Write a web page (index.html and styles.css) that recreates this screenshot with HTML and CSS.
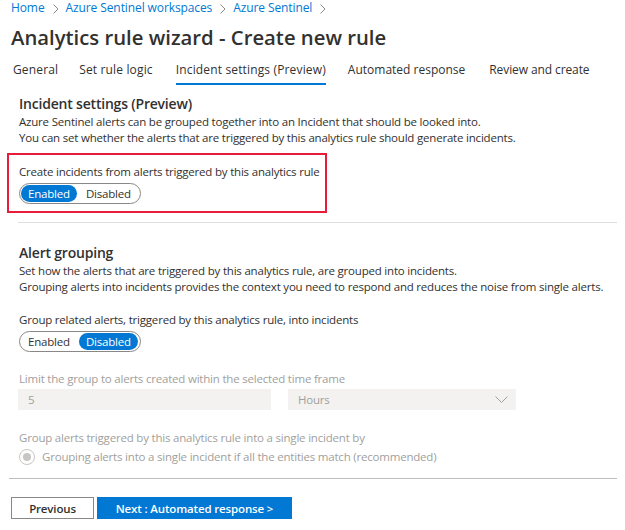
FILE: index.html
```html
<!DOCTYPE html>
<html>
<head>
<meta charset="utf-8">
<link rel="stylesheet" href="styles.css">
</head>
<body>
<div class="page">
  <nav class="crumbs">
    <a>Home</a><span class="sep"><svg width="6" height="10" viewBox="0 0 6 10"><path d="M0.5 0.5l4.5 4.5-4.5 4.5" fill="none" stroke="#8a8886" stroke-width="1"/></svg></span>
    <a>Azure Sentinel workspaces</a><span class="sep"><svg width="6" height="10" viewBox="0 0 6 10"><path d="M0.5 0.5l4.5 4.5-4.5 4.5" fill="none" stroke="#8a8886" stroke-width="1"/></svg></span>
    <a>Azure Sentinel</a><span class="sep"><svg width="6" height="10" viewBox="0 0 6 10"><path d="M0.5 0.5l4.5 4.5-4.5 4.5" fill="none" stroke="#8a8886" stroke-width="1"/></svg></span>
  </nav>
  <h1 class="title">Analytics rule wizard - Create new rule</h1>
  <div class="tabs">
    <span class="tab t1">General</span>
    <span class="tab t2">Set rule logic</span>
    <span class="tab t3 active">Incident settings (Preview)</span>
    <span class="tab t4">Automated response</span>
    <span class="tab t5">Review and create</span>
  </div>

  <section class="sec first">
    <h2 class="heading">Incident settings (Preview)</h2>
    <p class="desc">Azure Sentinel alerts can be grouped together into an Incident that should be looked into.</p>
    <p class="desc">You can set whether the alerts that are triggered by this analytics rule should generate incidents.</p>
    <div class="highlight">
      <div class="label">Create incidents from alerts triggered by this analytics rule</div>
      <div class="toggle">
        <span class="opt on">Enabled</span><span class="opt">Disabled</span>
      </div>
    </div>
  </section>

  <hr class="divider">

  <section class="sec second">
    <h2 class="heading">Alert grouping</h2>
    <p class="desc d16">Set how the alerts that are triggered by this analytics rule, are grouped into incidents.</p>
    <p class="desc d16">Grouping alerts into incidents provides the context you need to respond and reduces the noise from single alerts.</p>
    <div class="label gap">Group related alerts, triggered by this analytics rule, into incidents</div>
    <div class="toggle">
      <span class="opt">Enabled</span><span class="opt on">Disabled</span>
    </div>

    <div class="label disabled gap2">Limit the group to alerts created within the selected time frame</div>
    <div class="fields">
      <div class="input">5</div>
      <div class="select">Hours<svg width="13" height="7" viewBox="0 0 13 7"><path d="M0.5 0.5l6 6 6-6" fill="none" stroke="#a19f9d" stroke-width="1"/></svg></div>
    </div>

    <div class="label disabled gap3">Group alerts triggered by this analytics rule into a single incident by</div>
    <div class="radio-row">
      <span class="radio"><span class="dot"></span></span>
      <span class="radio-text">Grouping alerts into a single incident if all the entities match (recommended)</span>
    </div>
  </section>

  <hr class="footline">
  <div class="buttons">
    <button class="btn prev">Previous</button>
    <button class="btn next">Next : Automated response &gt;</button>
  </div>
</div>
</body>
</html>
```
FILE: styles.css
```css
* { box-sizing: border-box; }
body {
  margin: 0;
  font-family: "Open Sans", "Noto Sans", sans-serif;
  color: #323130;
  background: #fff;
}

.crumbs {
  display: flex;
  align-items: center;
  padding-left: 11px;
  height: 16px;
  font-size: 12px;
  line-height: 16px;
  letter-spacing: -0.1px;
}
.crumbs a { color: #0078d4; }
.crumbs .sep { display: inline-flex; margin: 1px 7px 0 8px; }

.title {
  margin: 8px 0 0 11px;
  font-size: 20.3px;
  line-height: 26px;
  font-weight: 600;
  color: #323130;
}

.tabs {
  display: flex;
  margin: 12px 0 0 13px;
  font-size: 12px;
  line-height: 16px;
  letter-spacing: 0.15px;
}
.tab { padding-bottom: 5px; border-bottom: 2px solid transparent; }
.t1 { margin-right: 21px; }
.t2 { margin-right: 23px; }
.t3 { margin-right: 22px; }
.t4 { margin-right: 24px; letter-spacing: 0; }
.t5 { letter-spacing: -0.1px; }
.tab.active { border-bottom-color: #0078d4; }

.sec { padding-left: 19px; }
.first { padding-top: 9px; }
.heading {
  margin: 0;
  font-size: 14px;
  line-height: 20px;
  font-weight: 600;
  letter-spacing: -0.2px;
}
.desc {
  margin: 0;
  font-size: 11.5px;
  line-height: 15.5px;
  letter-spacing: -0.2px;
}
.desc.d16 { line-height: 16px; }

.highlight {
  margin: 8px 0 0 -12px;
  width: 320px;
  border: 2px solid #e81b3a;
  padding: 9px 0 7px 10px;
}
.label {
  font-size: 11.5px;
  line-height: 16px;
  letter-spacing: -0.2px;
}
.toggle {
  display: flex;
  width: fit-content;
  gap: 2px;
  margin-top: 3px;
  border: 1px solid #8a8886;
  border-radius: 11px;
  padding: 1px 2px 1px 1px;
  height: 21px;
}
.opt {
  font-size: 11.5px;
  line-height: 17px;
  letter-spacing: -0.2px;
  padding: 0 7px;
  border-radius: 9px;
}
.opt.on { background: #0078d4; color: #fff; }

.divider {
  margin: 9px 8px 0 18px;
  border: 0;
  border-top: 1px solid #e1dfdd;
}
.second { padding-top: 19px; }
.second .heading { margin-top: 1px; }
.gap { margin-top: 17px; }
.gap2 { margin-top: 19px; }
.gap3 { margin-top: 20px; }
.disabled { color: #a19f9d; }

.fields {
  display: flex;
  margin: 2px 0 0 -1px;
  gap: 17px;
}
.input, .select {
  height: 21px;
  background: #f3f2f1;
  color: #a19f9d;
  font-size: 11.5px;
  line-height: 21px;
  letter-spacing: -0.2px;
  padding-left: 10px;
}
.input { width: 253px; }
.select {
  width: 228px;
  display: flex;
  align-items: center;
  justify-content: space-between;
  padding-right: 8px;
}

.radio-row {
  display: flex;
  align-items: center;
  gap: 7px;
  margin-top: 3px;
}
.radio {
  width: 16px;
  height: 16px;
  border: 1px solid #c8c6c4;
  border-radius: 50%;
  display: flex;
  align-items: center;
  justify-content: center;
}
.dot { width: 8px; height: 8px; border-radius: 50%; background: #c8c6c4; }
.radio-text {
  font-size: 11.5px;
  line-height: 16px;
  letter-spacing: -0.2px;
  color: #a19f9d;
}

.footline {
  margin: 13px 8px 0 9px;
  border: 0;
  border-top: 1px solid #bdbdbd;
}
.buttons {
  display: flex;
  gap: 3px;
  margin: 18px 0 0 11px;
}
.btn {
  height: 22px;
  font-family: inherit;
  font-size: 11.5px;
  font-weight: 600;
  letter-spacing: -0.15px;
  border-radius: 0;
  padding: 0;
}
.prev {
  width: 83px;
  background: #fff;
  border: 1px solid #8a8886;
  color: #323130;
}
.next {
  width: 195px;
  background: #0078d4;
  border: 1px solid #0078d4;
  color: #fff;
}
```
